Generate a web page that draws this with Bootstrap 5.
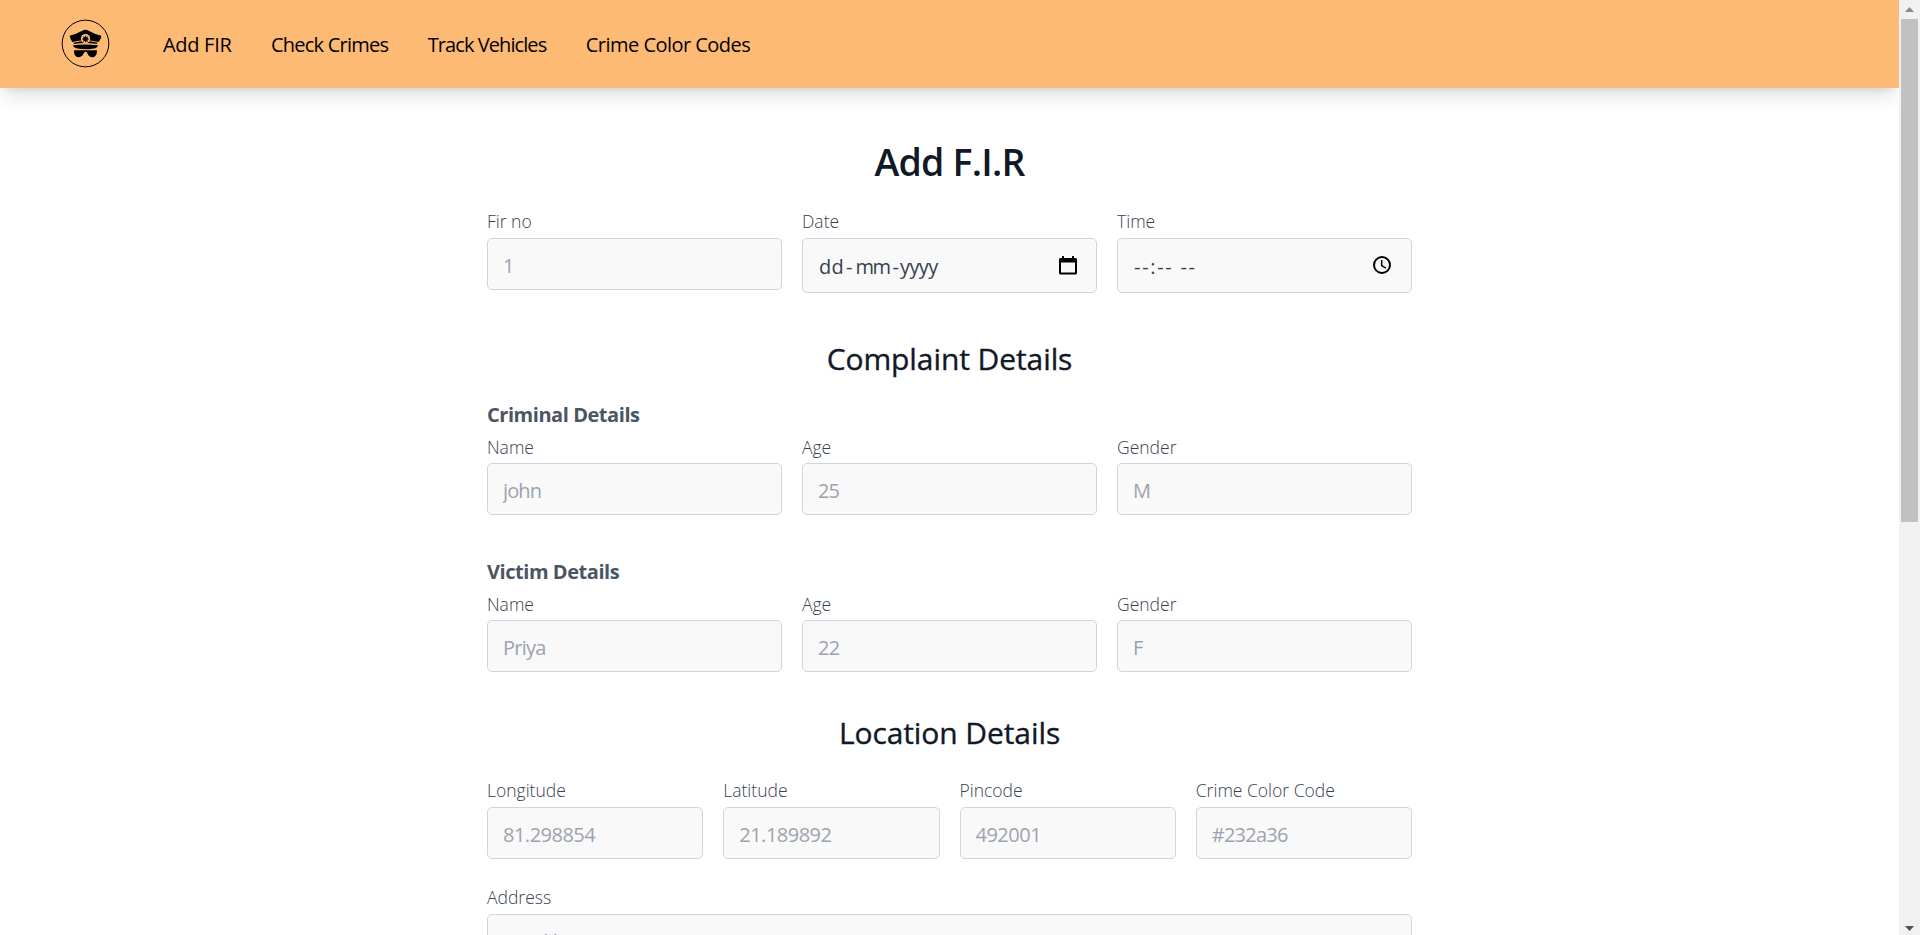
<!DOCTYPE html>
<html lang="en">
<head>
<meta charset="utf-8">
<title>Add F.I.R</title>
<meta name="viewport" content="width=device-width, initial-scale=1">
<link href="https://cdn.jsdelivr.net/npm/bootstrap@5.3.0/dist/css/bootstrap.min.css" rel="stylesheet">
<style>
body{font-family:"Open Sans",sans-serif;font-size:20px;line-height:30px;color:#4b5563;height:100vh}
.page-view{height:100vh;overflow:hidden;background:#fff}
.top-nav{height:88px;background:#fdba74;box-shadow:0 12px 19px -4px rgba(0,0,0,.12),0 5px 8px -5px rgba(0,0,0,.12);padding:0 0 0 61px;flex-shrink:0}
.top-nav .nav-link{color:#000;padding:0;white-space:nowrap;line-height:30px}
.links{margin-left:53px;padding-top:2px;gap:39.500px}
.fir-form{width:925px;padding-top:51px;flex-shrink:0}
h1{font-size:37.5px;line-height:45px;font-weight:600;letter-spacing:-.77px;color:#111827;margin:0 0 19px}
h2{font-size:30px;line-height:37.5px;font-weight:500;letter-spacing:-.09px;color:#111827;margin:0 0 21px;-webkit-text-stroke:.35px #111827}
h3{font-size:20px;line-height:30px;font-weight:700;letter-spacing:-.45px;margin:0;padding-top:2px;color:#4b5563}
.fir-form .row{--bs-gutter-x:20px}
.form-label{display:block;font-size:17.5px;line-height:33px;padding-top:2px;font-weight:300;margin:0;color:#374151}
h3 + .row .form-label{line-height:31px}
.form-control,.form-control:focus{height:52px;font-size:20px;line-height:30px;background:#f9f9f9;border:1px solid #d1d5db;border-radius:5px;padding:3px 15px 0;color:#374151;letter-spacing:-.5px}
.form-control::placeholder{color:#9ca3af}
.picker{height:55px;padding-left:16px;padding-right:19px;letter-spacing:0}
.picker svg{margin-top:-4px}
.bar-col{width:21px;background:#f1f1f1;flex-shrink:0;padding:0 2px}
.bar-btn{height:19px}
.bar-thumb{height:503px;background:#c1c1c1;width:17px}
.t1{letter-spacing:-.3px}.t2{letter-spacing:-.77px}.t3{letter-spacing:-.92px}.t4{letter-spacing:-.53px}
.w0{letter-spacing:-.9px}
</style>
</head>
<body class="d-flex overflow-hidden">
<div class="page-view flex-grow-1 d-flex flex-column">
  <nav class="top-nav d-flex align-items-center">
    <a href="#" class="d-flex" aria-label="Home" style="margin-top:-2px">
      <svg width="49" height="49" viewBox="33 32 147 147">
        <circle cx="106.500" cy="105.500" r="70" fill="none" stroke="#000" stroke-width="3"/>
        <path d="M59 82L76 77L97 67Q106 62 116 67L136 77L154 82Q155 90 148 98L145 101Q107 91 67 101Q61 94 59 82Z"/>
        <path d="M71 103Q106 95 142 103L141 107Q107 101 72 107Z"/>
        <path d="M69 111Q106 106 144 111Q143 117 136 120Q107 126 78 120Q70 117 69 111Z"/>
        <path d="M72 126H141L140 136Q136 147 125 147Q115 145 111 132Q107 129 103 132Q98 146 86 147Q76 146 73 137Z"/>
        <circle cx="106.500" cy="91" r="14" fill="#fdba74"/>
        <path d="M106.500 81L109 87L115 84L112 90L118 92L112 95L114 101L108 98L106.500 104L104 98L98 101L101 95L95 92L101 90L98 84L104 87Z"/>
      </svg>
    </a>
    <div class="links d-flex">
      <a class="nav-link t1" href="#">Add FIR</a>
      <a class="nav-link t2" href="#">Check Crimes</a>
      <a class="nav-link t3" href="#">Track Vehicles</a>
      <a class="nav-link t4" href="#">Crime Color Codes</a>
    </div>
  </nav>
  <form class="fir-form mx-auto">
    <h1 class="text-center">Add F.I.R</h1>
    <div class="row">
      <div class="col"><label class="form-label">Fir no</label><input class="form-control" placeholder="1"></div>
      <div class="col"><label class="form-label">Date</label>
        <div class="form-control picker d-flex align-items-center justify-content-between"><span><span style="letter-spacing:.3px">dd</span><span style="margin:0 3px 0 2px">-</span><span style="letter-spacing:-1.500px">mm</span><span style="margin:0 1px 0 3px">-</span><span style="letter-spacing:-.6px">yyyy</span></span>
          <svg width="18" height="19" viewBox="0 0 18 19"><path d="M3 0h2v2h8V0h2v2h1.500Q18 2 18 3.500v13.500Q18 18.500 16.500 18.500h-15Q0 18.500 0 17V3.500Q0 2 1.500 2H3ZM2 6.500V16.500H16V6.500Z" fill="#000" fill-rule="evenodd"/></svg></div></div>
      <div class="col"><label class="form-label">Time</label>
        <div class="form-control picker d-flex align-items-center justify-content-between"><span style="letter-spacing:1.700px">--:-- --</span>
          <svg width="20" height="20" viewBox="0 0 20 20" fill="none" stroke="#000"><circle cx="10" cy="10" r="8" stroke-width="2"/><path d="M9.700 5v5.600l4.200 2.500" stroke-width="1.500"/></svg></div></div>
    </div>
    <h2 class="text-center" style="margin-top:47px">Complaint Details</h2>
    <h3 style="margin-top:-1px">Criminal Details</h3>
    <div class="row">
      <div class="col"><label class="form-label">Name</label><input class="form-control w0" placeholder="john"></div>
      <div class="col"><label class="form-label">Age</label><input class="form-control w0" placeholder="25"></div>
      <div class="col"><label class="form-label">Gender</label><input class="form-control" placeholder="M"></div>
    </div>
    <h3 style="margin-top:40px">Victim Details</h3>
    <div class="row">
      <div class="col"><label class="form-label">Name</label><input class="form-control t2" placeholder="Priya"></div>
      <div class="col"><label class="form-label">Age</label><input class="form-control t2" placeholder="22"></div>
      <div class="col"><label class="form-label">Gender</label><input class="form-control" placeholder="F"></div>
    </div>
    <h2 class="text-center" style="margin-top:42px">Location Details</h2>
    <div class="row">
      <div class="col"><label class="form-label">Longitude</label><input class="form-control" placeholder="81.298854"></div>
      <div class="col"><label class="form-label">Latitude</label><input class="form-control" placeholder="21.189892"></div>
      <div class="col"><label class="form-label">Pincode</label><input class="form-control" placeholder="492001"></div>
      <div class="col"><label class="form-label">Crime Color Code</label><input class="form-control t2" placeholder="#232a36"></div>
    </div>
    <div style="margin-top:20px"><label class="form-label">Address</label><input class="form-control" placeholder="ward home"></div>
  </form>
</div>
<div class="bar-col d-flex flex-column">
  <div class="bar-btn d-flex justify-content-center align-items-center"><svg width="9" height="5" viewBox="0 0 9 5"><path d="M4.500 0L9 5H0Z" fill="#8b8b8b"/></svg></div>
  <div class="bar-thumb"></div>
  <div class="bar-btn mt-auto d-flex justify-content-center pt-2" style="height:17px"><svg width="9" height="5" viewBox="0 0 9 5"><path d="M0 0H9L4.500 5Z" fill="#505050"/></svg></div>
</div>
<script src="https://cdn.jsdelivr.net/npm/bootstrap@5.3.0/dist/js/bootstrap.bundle.min.js"></script>
</body>
</html>
